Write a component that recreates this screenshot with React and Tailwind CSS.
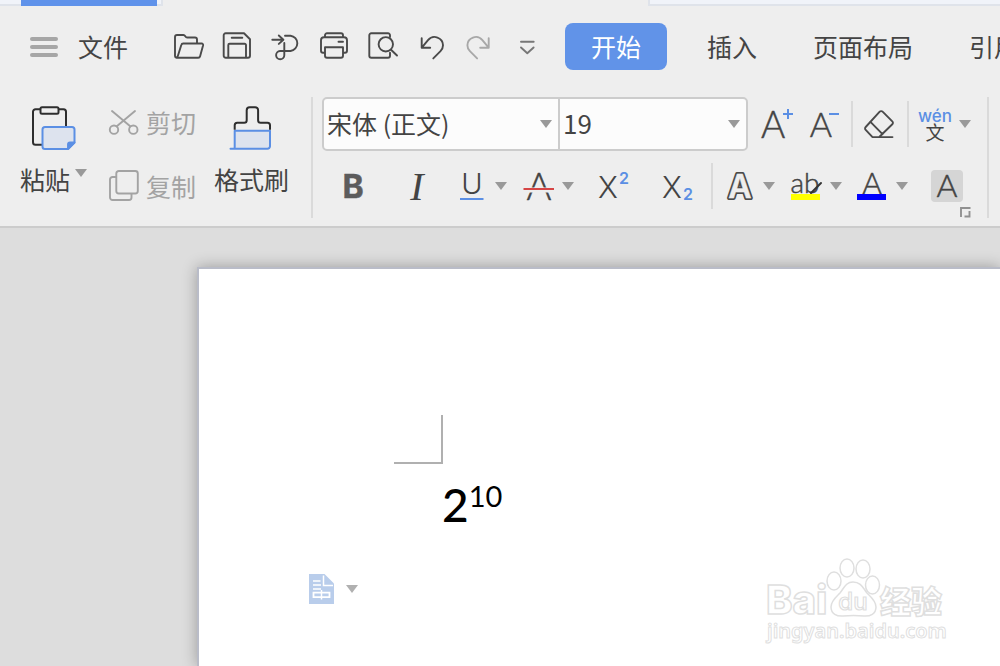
import { useState } from "react";

const tabs = ["插入", "页面布局", "引用"];

function Caret({ className = "text-[#999999]" }) {
  return (
    <svg width="12" height="8" viewBox="0 0 12 8" fill="currentColor" className={className} aria-hidden="true">
      <path d="M0 0h12L6 8z" />
    </svg>
  );
}

function Icon({ width = 30, height = 30, className = "", children }) {
  return (
    <svg width={width} height={height} viewBox={`0 0 ${width} ${height}`} fill="none" stroke="currentColor" strokeWidth="1.9" strokeLinecap="round" strokeLinejoin="round" className={`shrink-0 overflow-visible ${className}`} aria-hidden="true">
      {children}
    </svg>
  );
}

// thin outline in the fill colour, the light cuts are too faint on the grey bar
function Letter({ x = 16, y = 28, size = 32, weight = 300, fill = "#444444", font = "Lato, sans-serif", children, ...rest }) {
  return (
    <text x={x} y={y} fontSize={size} fontWeight={weight} fill={fill} fontFamily={font} textAnchor="middle" stroke={fill} strokeWidth="0.5" {...rest}>
      {children}
    </text>
  );
}

function ToolButton({ label, className = "", children }) {
  return (
    <button type="button" aria-label={label} className={`flex shrink-0 items-center ${className}`}>
      {children}
    </button>
  );
}

function Divider({ className = "" }) {
  return <div className={`w-[2px] shrink-0 bg-[#dadada] ${className}`} />;
}

function QuickAccess() {
  return (
    <div className="ml-[46px] flex items-center gap-[18px] text-[#4a4a4a]">
      <ToolButton label="打开">
        <Icon>
          <path d="M2 25.5a1.5 1.5 0 0 1-1-1.5V5a2 2 0 0 1 2-2h6.5q1 0 1.8 1.2.8 1.3 1.8 1.3H21a2 2 0 0 1 2 2v4M2.5 25.7h21.6a2 2 0 0 0 2-1.5l3-11a1.4 1.4 0 0 0-1.4-1.7H9.3a2 2 0 0 0-2 1.5L4 23.5q-.6 2.2-2 2" />
        </Icon>
      </ToolButton>
      <ToolButton label="保存">
        <Icon>
          <path d="M3.7 1.3H22l6 5.9v16.5a2 2 0 0 1-2 2H3.7a2 2 0 0 1-2-2V3.3a2 2 0 0 1 2-2zM6.3 25.5V13a1.3 1.3 0 0 1 1.3-1.3h15.1A1.3 1.3 0 0 1 24 13v12.5M9.7 5.7h10.6" />
        </Icon>
      </ToolButton>
      <ToolButton label="输出为PDF">
        <Icon>
          <path d="M2.3 7.7h11M8.8 3.5l4.6 4.2-4.6 4.2M15 3.7h5.5a7.7 7.7 0 0 1 0 15.3H10a4.1 4.1 0 1 0 4.3 4.2V11" />
        </Icon>
      </ToolButton>
      <ToolButton label="打印">
        <Icon>
          <path d="M7 20.7H5a2 2 0 0 1-2-2V8.3a3 3 0 0 1 3-3h20a3 3 0 0 1 3 3v10.4a2 2 0 0 1-2 2h-2M7 5V3.3a2 2 0 0 1 2-2h14a2 2 0 0 1 2 2V5M7 15.3h18v8.4a2 2 0 0 1-2 2H9a2 2 0 0 1-2-2zM20.5 9.7H25" />
        </Icon>
      </ToolButton>
      <ToolButton label="打印预览">
        <Icon>
          <path d="M24 5V3.3a2 2 0 0 0-2-2H5.3a2 2 0 0 0-2 2v20.4a2 2 0 0 0 2 2H22a2 2 0 0 0 2-2v-3M25 17.7l6 5.8" />
          <circle cx="19.8" cy="12.3" r="7.2" />
        </Icon>
      </ToolButton>
      <ToolButton label="撤销">
        <Icon>
          <path d="M7.7 6.3v9.4h8.5M8 15.3l6-7.2c5.2-6.3 15-2.3 15 5.2 0 2.5-1 4.4-2.5 5.9l-7.2 7.2" />
        </Icon>
      </ToolButton>
      <ToolButton label="恢复">
        <Icon className="text-[#a8a8a8]">
          <path d="M26.7 6.3v9.4h-8.5M26.4 15.3l-6-7.2c-5.2-6.3-15-2.3-15 5.2 0 2.5 1 4.4 2.5 5.9l7.2 7.2" />
        </Icon>
      </ToolButton>
      <ToolButton label="更多">
        <Icon className="text-[#777777]">
          <path d="M11 9.7h12.7M11 15.5l6.3 5.7 6.3-5.7" />
        </Icon>
      </ToolButton>
    </div>
  );
}

function MenuBar() {
  return (
    <div className="flex items-center overflow-hidden py-[17px] pl-[30px] text-[25px] whitespace-nowrap">
      <button type="button" className="flex shrink-0 items-center gap-5">
        <span className="flex w-7 flex-col gap-1">
          <span className="h-1 rounded-full bg-[#a6a6a6]" />
          <span className="h-1 rounded-full bg-[#a6a6a6]" />
          <span className="h-1 rounded-full bg-[#a6a6a6]" />
        </span>
        文件
      </button>
      <QuickAccess />
      <nav className="ml-[25px] flex items-center">
        <button type="button" className="h-[47px] shrink-0 rounded-lg bg-[#6193e8] px-[26px] text-white">开始</button>
        <div className="ml-10 flex gap-14">
          {tabs.map((tab) => (
            <button key={tab} type="button" className="shrink-0">{tab}</button>
          ))}
        </div>
      </nav>
    </div>
  );
}

function Clipboard() {
  return (
    <div className="flex shrink-0 pl-5 text-[25px] leading-[36px]">
      <button type="button" className="flex flex-col items-center pt-2">
        <Icon width={46} height={46} className="text-[#2e2e2e]">
          <path strokeWidth="2" d="M9 4.3H4.5a2.5 2.5 0 0 0-2.5 2.5v30.4a2.5 2.5 0 0 0 2.5 2.5H12M28 4.3h4.5A2.5 2.5 0 0 1 35 6.8V22" />
          <rect x="9.5" y="2.2" width="18" height="6.5" rx="1.5" strokeWidth="2" />
          <path stroke="#5b8fe4" strokeWidth="2" fill="#dde3ee" d="M14 22h27a2.5 2.5 0 0 1 2.5 2.5v13L37 44H14a2.5 2.5 0 0 1-2.5-2.5v-17A2.5 2.5 0 0 1 14 22z" />
          <path stroke="#5b8fe4" fill="#5b8fe4" d="M37 44v-4.5a2 2 0 0 1 2-2h4.5z" />
        </Icon>
        <span className="mt-[10px] flex gap-[5px]">
          粘贴
          <span className="pt-2"><Caret /></span>
        </span>
      </button>
      <div className="ml-[22px] flex flex-col gap-7 pt-[7px] text-[#a3a3a3]">
        <button type="button" className="flex items-center gap-[7px]">
          <Icon>
            <path d="M3 4l18.5 15.5M26 4L7.5 19.5" />
            <circle cx="5" cy="22.7" r="4.2" />
            <circle cx="24.3" cy="22.7" r="4.2" />
          </Icon>
          剪切
        </button>
        <button type="button" className="flex items-center gap-[7px]">
          <Icon height={32}>
            <rect x="7.3" y="1" width="21.5" height="22.5" rx="2.5" />
            <path d="M7 7H3.5A2.5 2.5 0 0 0 1 9.5v18A2.5 2.5 0 0 0 3.5 30H20a2.5 2.5 0 0 0 2.5-2.5V24" />
          </Icon>
          复制
        </button>
      </div>
      <button type="button" className="ml-[18px] flex flex-col items-center pt-2">
        <Icon width={46} height={46} className="text-[#2e2e2e]">
          <path fill="#dde3ee" stroke="#5b8fe4" strokeWidth="2" d="M5.7 25.7H41v15.5a2.5 2.5 0 0 1-2.5 2.5H1.5h2.7a1.5 1.5 0 0 0 1.5-1.5z" />
          <path strokeWidth="2" strokeLinecap="butt" d="M5.7 24.7v-4.5a2.5 2.5 0 0 1 2.5-2.5h7a2.5 2.5 0 0 0 2.5-2.5V5.2a3 3 0 0 1 3-3h5.400a3 3 0 0 1 3 3v10a2.5 2.5 0 0 0 2.5 2.5h6.9a2.5 2.5 0 0 1 2.5 2.5v4.5" />
        </Icon>
        <span className="mt-[10px]">格式刷</span>
      </button>
    </div>
  );
}

function FontSelects() {
  const [font, setFont] = useState("宋体 (正文)");
  const [size, setSize] = useState("19");

  return (
    <div className="flex h-[54px] shrink-0 divide-x-2 divide-[#cccccc] rounded-[5px] border-2 border-[#cccccc] bg-[#fcfcfc]">
      <label className="relative flex items-center">
        <select aria-label="字体" value={font} onChange={(e) => setFont(e.target.value)} className="h-full w-[234px] appearance-none pl-[3px] text-[25px] outline-none">
          <option>宋体 (正文)</option>
          <option>黑体</option>
        </select>
        <span className="pointer-events-none absolute right-[6px]"><Caret /></span>
      </label>
      <label className="relative flex items-center">
        <select aria-label="字号" value={size} onChange={(e) => setSize(e.target.value)} className="h-full w-[186px] appearance-none pb-1 pl-[3px] text-[26px] outline-none">
          <option>19</option>
          <option>20</option>
        </select>
        <span className="pointer-events-none absolute right-[6px]"><Caret /></span>
      </label>
    </div>
  );
}

function FontGroup() {
  return (
    <div className="relative ml-[9px] flex shrink-0 flex-col gap-2">
      <div className="flex h-[54px] items-center">
        <FontSelects />
        <ToolButton label="增大字号" className="ml-[13px]">
          <Icon width={34} height={32}>
            <Letter x={12} y={30} size={37}>A</Letter>
            <path stroke="#5b8fe4" strokeWidth="2" strokeLinecap="butt" d="M22 6h10M27 1v10" />
          </Icon>
        </ToolButton>
        <ToolButton label="减小字号" className="ml-4">
          <Icon width={30} height={32}>
            <Letter x={10} y={29} size={34}>A</Letter>
            <path stroke="#5b8fe4" strokeWidth="2" strokeLinecap="butt" d="M18 6h10" />
          </Icon>
        </ToolButton>
        <Divider className="ml-[10px] h-[46px]" />
        <ToolButton label="清除格式" className="ml-[11px]">
          <Icon className="text-[#4a4a4a]">
            <path d="M15.7 2.7a2 2 0 0 1 2.9 0l9.7 9.7a2 2 0 0 1 0 2.9L16 27.2l-.8.9H8.5l-6.8-7.2a2 2 0 0 1 0-2.9zM6.2 12.7l12.3 12.5M8.5 28.1H28.5" />
          </Icon>
        </ToolButton>
        <Divider className="ml-[13px] h-[46px]" />
        <ToolButton label="拼音指南" className="ml-[10px] gap-2">
          <Icon width={32} height={36}>
            <Letter y={16} size={17} weight={500} fill="#5b8fe4" font="Inter, sans-serif" strokeWidth="0">wén</Letter>
            <Letter y={34} size={19} weight={400} font="'Noto Sans CJK SC', sans-serif" strokeWidth="0">文</Letter>
          </Icon>
          <Caret />
        </ToolButton>
      </div>
      <div className="flex h-[54px] items-center pl-[15px]">
        <ToolButton label="加粗">
          <Icon width={32} height={32}>
            <Letter size={32} weight={700} fill="#5c5c5c" font="Inter, sans-serif">B</Letter>
          </Icon>
        </ToolButton>
        <ToolButton label="倾斜" className="ml-8">
          <Icon width={32} height={32}>
            <Letter y={30} size={40} weight={400} fill="#444444" font="'Liberation Serif', serif" fontStyle="italic" strokeWidth="0">I</Letter>
          </Icon>
        </ToolButton>
        <ToolButton label="下划线" className="ml-[23px] gap-[7px]">
          <Icon width={32} height={32}>
            <Letter y={24} size={29} font="Inter, sans-serif" strokeWidth="0">U</Letter>
            <path stroke="#5b8fe4" strokeWidth="2" strokeLinecap="butt" d="M4 29h23.5" />
          </Icon>
          <Caret />
        </ToolButton>
        <ToolButton label="删除线" className="ml-4 gap-[7px]">
          <Icon width={32} height={32}>
            <Letter y={30} size={38}>A</Letter>
            <path stroke="#eeeeee" strokeWidth="5" strokeLinecap="butt" d="M5 20h22" />
            <path stroke="#d64545" strokeWidth="2" strokeLinecap="butt" d="M.5 19H31" />
          </Icon>
          <Caret />
        </ToolButton>
        <ToolButton label="上标" className="ml-6">
          <Icon width={32} height={32}>
            <Letter x={10} y={28} size={30} font="Inter, sans-serif" strokeWidth="0">X</Letter>
            <Letter x={26} y={14} size={16} weight={600} fill="#5b8fe4" font="Inter, sans-serif" strokeWidth="0">2</Letter>
          </Icon>
        </ToolButton>
        <ToolButton label="下标" className="ml-8">
          <Icon width={32} height={32}>
            <Letter x={10} y={28} size={30} font="Inter, sans-serif" strokeWidth="0">X</Letter>
            <Letter x={26} y={30} size={16} weight={600} fill="#5b8fe4" font="Inter, sans-serif" strokeWidth="0">2</Letter>
          </Icon>
        </ToolButton>
        <Divider className="ml-[17px] h-[46px]" />
        <ToolButton label="文字效果" className="ml-[11px] gap-[7px]">
          <Icon width={32} height={32}>
            <Letter y={28} size={32} weight={600} font="Inter, sans-serif" stroke="#4a4a4a" strokeWidth="4">A</Letter>
            <Letter y={28} size={32} weight={600} font="Inter, sans-serif" fill="#eeeeee">A</Letter>
          </Icon>
          <Caret />
        </ToolButton>
        <ToolButton label="突出显示" className="ml-4 gap-[7px]">
          <Icon width={32} height={32}>
            <path fill="#ffff00" stroke="none" d="M0 24h29v6H0z" />
            <Letter x={14} y={23} size={28}>ab</Letter>
            <path stroke="#333333" strokeWidth="2" d="M30 13L20 23" />
          </Icon>
          <Caret />
        </ToolButton>
        <ToolButton label="字体颜色" className="ml-[15px] gap-[7px]">
          <Icon width={32} height={32}>
            <Letter x={15} y={24} size={30}>A</Letter>
            <path fill="#0000ff" stroke="none" d="M0 24h29v6H0z" />
          </Icon>
          <Caret />
        </ToolButton>
        <ToolButton label="字符底纹" className="ml-[23px] rounded bg-[#d5d5d5]">
          <Icon width={32} height={32}>
            <Letter y={27} size={32}>A</Letter>
          </Icon>
        </ToolButton>
      </div>
      <button type="button" aria-label="字体设置" className="absolute right-0 bottom-0 text-[#909090]">
        <Icon width={11} height={11}>
          <path strokeLinecap="butt" strokeLinejoin="miter" d="M1 10V1h9.5M9.5 4v5.5H4.5" />
        </Icon>
      </button>
    </div>
  );
}

function Watermark() {
  return (
    <svg width="190" height="92" viewBox="0 0 190 92" fill="#ffffff" stroke="#dfdfdf" strokeWidth="1.5" className="pointer-events-none absolute right-[50px] bottom-[18px] overflow-visible" aria-hidden="true">
      <g fontFamily="'Noto Sans', 'Noto Sans CJK SC', sans-serif" fontWeight="700">
        <ellipse cx="74" cy="25" rx="7" ry="9" />
        <ellipse cx="87" cy="12" rx="7" ry="9" />
        <ellipse cx="103" cy="13" rx="7" ry="9" />
        <ellipse cx="112.5" cy="29" rx="7" ry="9" />
        <path d="M93 26c8 0 10 6 14 11 4 4 9 8 9 14 0 7-6 9.5-12 9-7-.8-14-.8-21 0-6 .5-12-2-12-9 0-6 5-10 9-14 4-5 6-11 13-11z" />
        <text x="6" y="58" fontSize="40" fontWeight="800" fontFamily="Inter, sans-serif">Bai</text>
        <text x="93" y="54" fontSize="24" fontWeight="500" textAnchor="middle" fontFamily="Inter, sans-serif" strokeWidth="1.2">du</text>
        <text x="120" y="57" fontSize="31" fontWeight="900">经验</text>
        <text x="7" y="82" fontSize="20" fontWeight="600" strokeWidth="1">jingyan.baidu.com</text>
      </g>
    </svg>
  );
}

function DocumentPage() {
  return (
    <main className="flex flex-1 bg-[#dddddd] pt-[39px] pl-[197px]">
      <div className="relative flex-1 border-t-2 border-l-2 border-[#b9bcc8] bg-white pt-[146px] shadow-[0_0_14px_rgba(0,0,0,0.3)]">
        <div className="ml-[195px] h-[49px] w-[49px] border-r-2 border-b-2 border-[#b0b0b0]" />
        <p className="mt-4 ml-[243px] flex h-[50px] font-[Lato] text-[46px] leading-[50px] font-medium text-black">
          2<sup className="top-0 text-[29px] leading-[32px] font-normal">10</sup>
        </p>
        <button type="button" aria-label="段落布局" className="mt-11 ml-[110px] flex items-center gap-3">
          <svg width="25" height="30" viewBox="0 0 25 30" aria-hidden="true">
            <path fill="#b9cdeb" d="M0 0h15.5L25 9.5V30H0z" />
            <path fill="none" stroke="#ffffff" strokeWidth="1.5" d="M14.5 1.5V11.5H24M4 7h7.5M4 11h8M4 15h8M12.5 16v9.5" />
            <path fill="none" stroke="#ffffff" strokeWidth="1.8" d="M4.5 18.7h16v4.5h-16z" />
          </svg>
          <Caret className="text-[#b0b0b0]" />
        </button>
        <Watermark />
      </div>
    </main>
  );
}

export default function App() {
  return (
    <div className="flex min-h-screen flex-col overflow-hidden bg-[#eeeeee] font-['Noto_Sans_CJK_SC','Noto_Sans',sans-serif] text-[#444444]">
      <div className="flex h-[6px]">
        <div className="w-[163px] border-r-2 border-b-2 border-[#dfe3ea] bg-[#f0f3f9] pl-[21px]">
          <div className="h-[6px] w-[136px] bg-[#5f92ea]" />
        </div>
        <div className="w-[485px]" />
        <div className="flex-1 border-b-2 border-l-2 border-[#dfe3ea] bg-[#f0f3f9]" />
      </div>
      <header className="border-b-2 border-[#cccccc]">
        <MenuBar />
        <div className="flex pt-[10px] pb-2">
          <Clipboard />
          <Divider className="ml-[22px] h-[121px]" />
          <FontGroup />
          <Divider className="ml-[16px] h-[121px]" />
        </div>
      </header>
      <DocumentPage />
    </div>
  );
}
